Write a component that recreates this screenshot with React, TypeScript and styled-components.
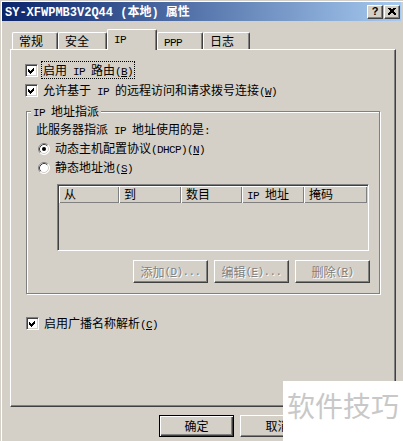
import React from "react";
import styled, { createGlobalStyle } from "styled-components";

const C = { face: "#d4d0c8", shadow: "#808080", dark: "#404040", hi: "#ffffff" };

const Global = createGlobalStyle`
  html, body { margin: 0; padding: 0; background: ${C.face}; }
  body {
    font-family: "Noto Sans CJK SC", "Liberation Sans", sans-serif;
    font-size: 12px;
    color: #000;
  }
  * { box-sizing: border-box; }
`;

const Lat = styled.span<{ $title?: boolean }>`
  font-family: "Liberation Mono", "DejaVu Sans Mono", monospace;
  font-size: ${(p) => (p.$title ? "12px" : "11px")};
  letter-spacing: ${(p) => (p.$title ? "0" : "-0.6px")};
`;

const U = styled.span`
  text-decoration: underline;
  text-underline-offset: 1px;
`;

function T({ s, title }: { s: string; title?: boolean }) {
  const parts = s.match(/[\x00-\x7f]+|[^\x00-\x7f]+/g) ?? [];
  return (
    <>
      {parts.map((p, i) => {
        if (!/^[\x00-\x7f]/.test(p)) return <React.Fragment key={i}>{p}</React.Fragment>;
        const k = p.indexOf("&");
        if (k < 0)
          return (
            <Lat key={i} $title={title}>
              {p}
            </Lat>
          );
        return (
          <Lat key={i} $title={title}>
            {p.slice(0, k)}
            <U>{p[k + 1]}</U>
            {p.slice(k + 2)}
          </Lat>
        );
      })}
    </>
  );
}

const Window = styled.div`
  position: relative;
  width: 403px;
  height: 441px;
  background: ${C.face};
  padding: 2px 2px 0 2px;
  box-shadow: inset 1px 1px 0 ${C.face}, inset 2px 2px 0 ${C.hi};
  overflow: hidden;
  display: flex;
  flex-direction: column;
`;

const TitleBar = styled.div`
  height: 19px;
  display: flex;
  align-items: center;
  padding: 0 1px 0 3px;
  background: linear-gradient(to right, #0a246a, #a6caf0);
  color: #fff;
  font-weight: bold;
`;

const TitleText = styled.div`
  line-height: 19px;
  white-space: nowrap;
`;

const CapButtons = styled.div`
  margin-left: auto;
  display: flex;
  gap: 1px;
`;

const CapBtn = styled.div`
  width: 16px;
  height: 14px;
  background: ${C.face};
  border: 1px solid;
  border-color: ${C.hi} ${C.dark} ${C.dark} ${C.hi};
  box-shadow: inset -1px -1px 0 ${C.shadow};
  display: flex;
  align-items: center;
  justify-content: center;
  color: #000;
  font-family: "Liberation Sans", sans-serif;
  font-weight: bold;
  font-size: 11px;
  line-height: 11px;
`;

const Body = styled.div`
  padding: 0 5px 0 8px;
  display: flex;
  flex-direction: column;
`;

const TabStrip = styled.div`
  display: flex;
  align-items: flex-end;
  height: 20px;
  margin-top: 8px;
  padding-left: 2px;
`;

const Tab = styled.div<{ $w: number; $active?: boolean }>`
  position: relative;
  z-index: ${(p) => (p.$active ? 2 : 1)};
  width: ${(p) => p.$w}px;
  height: ${(p) => (p.$active ? 21 : 17)}px;
  margin-bottom: ${(p) => (p.$active ? -1 : 0)}px;
  background: ${C.face};
  border-top: 1px solid ${C.hi};
  border-left: 1px solid ${C.hi};
  border-right: 1px solid ${C.dark};
  border-radius: 2px 2px 0 0;
  box-shadow: inset -1px 0 0 ${C.shadow};
  padding-left: 6px;
  line-height: ${(p) => (p.$active ? 16 : 15)}px;
  white-space: nowrap;
`;

const Panel = styled.div`
  width: 386px;
  height: 358px;
  border-top: 1px solid ${C.hi};
  border-left: 1px solid ${C.hi};
  border-right: 1px solid ${C.dark};
  border-bottom: 1px solid ${C.dark};
  box-shadow: inset -1px -1px 0 ${C.shadow};
  padding: 10px 0 0 14px;
  display: flex;
  flex-direction: column;
  align-items: flex-start;
`;

const CheckRow = styled.div<{ $indent?: number; $mt?: number }>`
  display: flex;
  align-items: center;
  height: 20px;
  margin-left: ${(p) => p.$indent ?? 0}px;
  margin-top: ${(p) => p.$mt ?? 0}px;
`;

const Box = styled.div`
  width: 13px;
  height: 13px;
  background: #fff;
  border: 1px solid;
  border-color: ${C.shadow} ${C.hi} ${C.hi} ${C.shadow};
  box-shadow: inset 1px 1px 0 ${C.dark}, inset -1px -1px 0 ${C.face};
  padding: 1px;
  display: flex;
`;

const Label = styled.span<{ $focus?: boolean }>`
  margin-left: 4px;
  padding: 0 1px;
  height: 16px;
  line-height: 16px;
  white-space: nowrap;
  outline: ${(p) => (p.$focus ? "1px dotted #000" : "none")};
  outline-offset: 0;
`;

function CheckBox({ label, focus, indent, mt }: { label: string; focus?: boolean; indent?: number; mt?: number }) {
  return (
    <CheckRow $indent={indent} $mt={mt}>
      <Box>
        <svg width="9" height="9" viewBox="0 0 9 9" shapeRendering="crispEdges">
          <path d="M1 3 L3 5 L7 1 L7 4 L3 8 L1 6 Z" fill="#000" />
        </svg>
      </Box>
      <Label $focus={focus}>
        <T s={label} />
      </Label>
    </CheckRow>
  );
}

const Group = styled.fieldset`
  margin: 4px 0 0 1px;
  width: 354px;
  padding: 0 9px 10px 0;
  border: 1px solid ${C.shadow};
  box-shadow: inset 1px 1px 0 ${C.hi}, 1px 1px 0 ${C.hi};
  min-inline-size: 0;
  display: flex;
  flex-direction: column;
  align-items: flex-start;
`;

const Legend = styled.legend`
  margin-left: 4px;
  padding: 0 2px;
  line-height: 14px;
  height: 14px;
  background: ${C.face};
  white-space: nowrap;
`;

const Desc = styled.div`
  height: 21px;
  line-height: 21px;
  padding-left: 9px;
  white-space: nowrap;
`;

const RadioRow = styled.div`
  display: flex;
  align-items: center;
  height: 19px;
  padding-left: 11px;
  white-space: nowrap;
`;

const RadioText = styled.span`
  margin-left: 5px;
  line-height: 16px;
`;

function Radio({ label, checked }: { label: string; checked?: boolean }) {
  return (
    <RadioRow>
      <svg width="12" height="12" viewBox="0 0 12 12">
        <circle cx="6" cy="6" r="5.5" fill="#fff" />
        <path d="M9.89 2.11 A5.5 5.5 0 0 0 2.11 9.89" stroke={C.shadow} fill="none" />
        <path d="M9.18 2.82 A4.5 4.5 0 0 0 2.82 9.18" stroke={C.dark} fill="none" />
        <path d="M9.89 2.11 A5.5 5.5 0 0 1 2.11 9.89" stroke={C.hi} fill="none" />
        <path d="M9.18 2.82 A4.5 4.5 0 0 1 2.82 9.18" stroke={C.face} fill="none" />
        {checked && <circle cx="6" cy="6" r="2" fill="#000" />}
      </svg>
      <RadioText>
        <T s={label} />
      </RadioText>
    </RadioRow>
  );
}

const List = styled.div`
  margin: 7px 0 0 30px;
  width: 312px;
  height: 67px;
  padding: 1px;
  border: 1px solid;
  border-color: ${C.shadow} ${C.hi} ${C.hi} ${C.shadow};
  box-shadow: inset 1px 1px 0 ${C.dark}, inset -1px -1px 0 ${C.face};
  background: ${C.face};
`;

const Header = styled.div`
  display: flex;
  height: 17px;
`;

const HeadCell = styled.div<{ $w: number }>`
  width: ${(p) => p.$w}px;
  height: 17px;
  padding-left: 5px;
  line-height: 16px;
  white-space: nowrap;
  box-shadow: inset 1px 1px 0 ${C.hi}, inset -1px -1px 0 ${C.shadow};
`;

const GroupButtons = styled.div`
  margin-top: 9px;
  align-self: stretch;
  display: flex;
  justify-content: flex-end;
  gap: 6px;
`;

const PushButton = styled.div<{ $disabled?: boolean; $default?: boolean; $h?: number }>`
  width: 75px;
  height: ${(p) => p.$h ?? 23}px;
  background: ${C.face};
  border: 1px solid;
  border-color: ${(p) => (p.$default ? "#000" : `${C.hi} ${C.dark} ${C.dark} ${C.hi}`)};
  box-shadow: ${(p) =>
    p.$default
      ? `inset 1px 1px 0 ${C.hi}, inset -1px -1px 0 ${C.dark}, inset -2px -2px 0 ${C.shadow}`
      : `inset -1px -1px 0 ${C.shadow}`};
  display: flex;
  align-items: center;
  justify-content: center;
  white-space: nowrap;
  color: ${(p) => (p.$disabled ? C.shadow : "#000")};
  text-shadow: ${(p) => (p.$disabled ? `1px 1px 0 ${C.hi}` : "none")};
  line-height: 16px;
`;

const BottomRow = styled.div`
  margin-top: 8px;
  display: flex;
  justify-content: flex-end;
  gap: 6px;
`;

const Watermark = styled.div`
  position: absolute;
  right: 0;
  bottom: 0;
  width: 120px;
  height: 60px;
  background: #fff;
  color: #c8c8c8;
  font-family: "Noto Sans CJK SC", sans-serif;
  font-size: 28px;
  line-height: 28px;
  padding: 10px 0 0 4px;
  white-space: nowrap;
`;

const columns: [string, number][] = [
  ["从", 60],
  ["到", 62],
  ["数目", 61],
  ["IP 地址", 62],
  ["掩码", 63],
];

export default function App() {
  return (
    <>
      <Global />
      <Window>
        <TitleBar>
          <TitleText>
            <T s="SY-XFWPMB3V2Q44 (本地) 属性" title />
          </TitleText>
          <CapButtons>
            <CapBtn>?</CapBtn>
            <CapBtn>
              <svg width="8" height="7" viewBox="0 0 8 7" shapeRendering="crispEdges">
                <path d="M0.5 0 L7.5 7 M1.5 0 L8 6.5 M7.5 0 L0.5 7 M6.5 0 L0 6.5" stroke="#000" strokeWidth="1" />
              </svg>
            </CapBtn>
          </CapButtons>
        </TitleBar>
        <Body>
          <TabStrip>
            <Tab $w={46}>常规</Tab>
            <Tab $w={49}>安全</Tab>
            <Tab $w={50} $active>
              <T s="IP" />
            </Tab>
            <Tab $w={46}>
              <T s="PPP" />
            </Tab>
            <Tab $w={47}>日志</Tab>
          </TabStrip>
          <Panel>
            <CheckBox label="启用 IP 路由(&B)" focus />
            <CheckBox label="允许基于 IP 的远程访问和请求拨号连接(&W)" />
            <Group>
              <Legend>
                <T s="IP 地址指派" />
              </Legend>
              <Desc>
                <T s="此服务器指派 IP 地址使用的是:" />
              </Desc>
              <Radio label="动态主机配置协议(DHCP)(&N)" checked />
              <Radio label="静态地址池(&S)" />
              <List>
                <Header>
                  {columns.map(([t, w]) => (
                    <HeadCell key={t} $w={w}>
                      <T s={t} />
                    </HeadCell>
                  ))}
                </Header>
              </List>
              <GroupButtons>
                <PushButton $disabled>
                  <T s="添加(&D)..." />
                </PushButton>
                <PushButton $disabled>
                  <T s="编辑(&E)..." />
                </PushButton>
                <PushButton $disabled>
                  <T s="删除(&R)" />
                </PushButton>
              </GroupButtons>
            </Group>
            <CheckBox label="启用广播名称解析(&C)" indent={1} mt={19} />
          </Panel>
          <BottomRow>
            <PushButton $default $h={22}>确定</PushButton>
            <PushButton $h={22}>取消</PushButton>
            <PushButton $h={22} $disabled>
              <T s="应用(&A)" />
            </PushButton>
          </BottomRow>
        </Body>
        <Watermark>软件技巧</Watermark>
      </Window>
    </>
  );
}
